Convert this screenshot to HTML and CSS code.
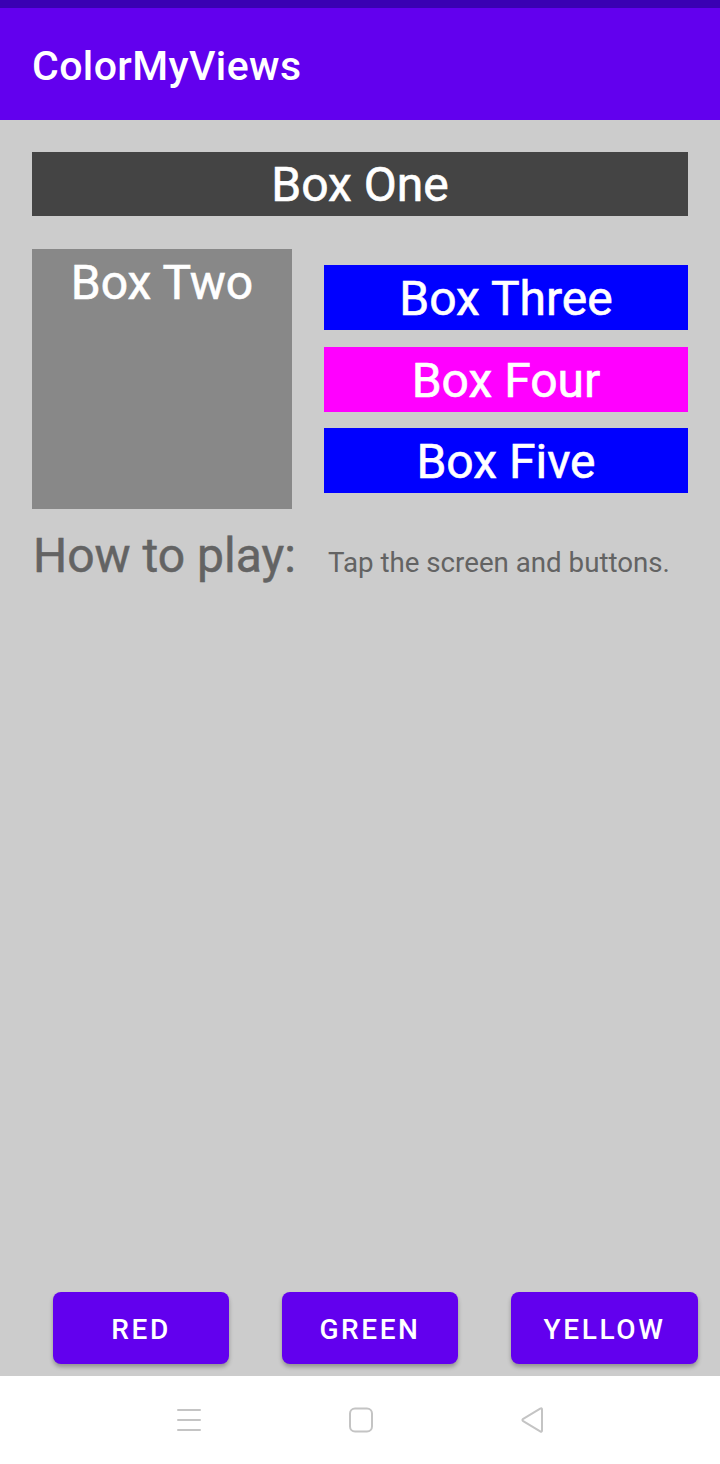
FILE: index.html
```html
<!DOCTYPE html>
<html>
<head>
<meta charset="utf-8">
<link rel="stylesheet" href="styles.css">
</head>
<body>
<div class="status"></div>
<header class="appbar"><span class="title">ColorMyViews</span></header>
<main class="content">
  <div class="top">
    <div class="box box-one">Box One</div>
    <div class="row">
      <div class="box box-two">Box Two</div>
      <div class="stack">
        <div class="box box-three">Box Three</div>
        <div class="box box-four">Box Four</div>
        <div class="box box-five">Box Five</div>
      </div>
    </div>
    <div class="info">
      <span class="label">How to play:</span>
      <span class="hint">Tap the screen and buttons.</span>
    </div>
  </div>
  <div class="buttons">
    <button class="btn btn-red">RED</button>
    <button class="btn btn-green">GREEN</button>
    <button class="btn btn-yellow">YELLOW</button>
  </div>
</main>
<nav class="navbar">
  <svg class="nav-icon" width="26" height="26" viewBox="0 0 26 26"><g stroke="#c4c4c4" stroke-width="2" stroke-linecap="round"><line x1="2" y1="3" x2="24" y2="3"/><line x1="2" y1="13" x2="24" y2="13"/><line x1="2" y1="23" x2="24" y2="23"/></g></svg>
  <svg class="nav-icon" width="26" height="26" viewBox="0 0 26 26"><rect x="2" y="1.5" width="22" height="23" rx="5" fill="none" stroke="#c4c4c4" stroke-width="2"/></svg>
  <svg class="nav-icon" width="26" height="26" viewBox="0 0 26 26"><path d="M22 2.5 L22 23.5 Q22 25.5 20.2 24.4 L3.2 14.2 Q1.6 13 3.2 11.8 L20.2 1.6 Q22 0.5 22 2.5 Z" fill="none" stroke="#c4c4c4" stroke-width="2" stroke-linejoin="round"/></svg>
</nav>
</body>
</html>
```
FILE: styles.css
```css
* { box-sizing: border-box; }
html, body {
  margin: 0;
  padding: 0;
}
body {
  width: 720px;
  height: 1464px;
  display: flex;
  flex-direction: column;
  font-family: Roboto, "Liberation Sans", sans-serif;
  background: #cccccc;
  overflow: hidden;
}
.status {
  height: 8px;
  background: #3a00b3;
  flex: none;
}
.appbar {
  height: 112px;
  flex: none;
  background: #6200ee;
  display: flex;
  align-items: center;
  padding: 3px 0 0 32px;
}
.title {
  color: #ffffff;
  font-size: 41px;
  font-weight: 500;
  letter-spacing: 0.4px;
}
.content {
  flex: 1;
  display: flex;
  flex-direction: column;
  justify-content: space-between;
  background: #cccccc;
}
.top {
  padding: 32px 32px 0 32px;
}
.box {
  color: #ffffff;
  font-size: 48px;
  text-align: center;
  -webkit-text-stroke: 0.6px #ffffff;
}
.box-one {
  height: 64px;
  background: #444444;
  display: flex;
  align-items: center;
  justify-content: center;
}
.row {
  display: flex;
  gap: 32px;
  margin-top: 33px;
}
.box-two {
  width: 260px;
  height: 260px;
  flex: none;
  background: #888888;
  padding-top: 6px;
  line-height: 56px;
}
.stack {
  flex: 1;
  display: flex;
  flex-direction: column;
  padding-top: 16px;
}
.stack .box {
  height: 65px;
  display: flex;
  align-items: center;
  justify-content: center;
  padding-top: 2px;
}
.box-three { background: #0000ff; }
.box-four { background: #ff00ff; margin-top: 17px; }
.box-five { background: #0000ff; margin-top: 16px; }
.info {
  display: flex;
  align-items: baseline;
  margin-top: 18px;
  color: #636363;
}
.label {
  font-size: 48px;
  padding-left: 1px;
  width: 296px;
  flex: none;
  white-space: nowrap;
  -webkit-text-stroke: 0.5px #636363;
}
.hint {
  font-size: 27.7px;
  white-space: nowrap;
}
.buttons {
  display: flex;
  gap: 53px;
  padding: 0 0 12px 53px;
}
.btn {
  height: 72px;
  border: none;
  border-radius: 8px;
  background: #6200ee;
  color: #ffffff;
  font-family: Roboto, "Liberation Sans", sans-serif;
  font-size: 28px;
  font-weight: 500;
  letter-spacing: 2.6px;
  box-shadow: 0 3px 4px rgba(0, 0, 0, 0.28);
  padding: 2px 0 0 0;
}
.btn-red, .btn-green { width: 176px; }
.btn-yellow { width: 187px; }
.navbar {
  height: 88px;
  flex: none;
  background: #ffffff;
  display: flex;
  align-items: center;
  justify-content: center;
  gap: 146px;
  padding-left: 2px;
}
.nav-icon {
  display: block;
}
```
